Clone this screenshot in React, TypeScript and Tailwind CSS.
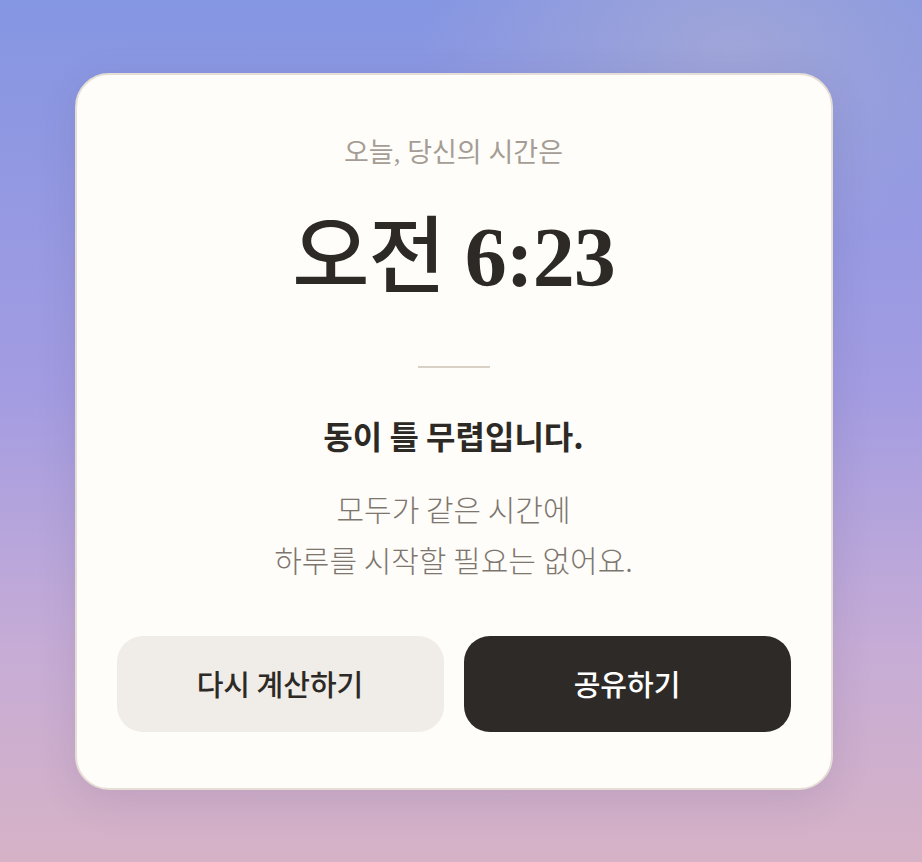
export default function App() {
  return (
    <div className="relative flex min-h-[862px] w-full items-center justify-center overflow-hidden bg-[linear-gradient(180deg,#8596e2_0%,#a39ce2_45%,#c6acd6_75%,#d6b2c6_100%)] pr-[15px]">
      {/* soft glow top right */}
      <div className="pointer-events-none absolute -right-[120px] -top-[160px] h-[420px] w-[620px] rounded-full bg-[radial-gradient(closest-side,rgba(170,172,212,0.7),rgba(170,172,212,0))]" />

      <div className="relative w-[758px] rounded-[34px] border-2 border-[#e4ded6] bg-[#fffdf9] px-10 pb-[56px] pt-[60px] text-center font-['Noto_Sans_CJK_KR','Noto_Sans',sans-serif] shadow-[0_10px_40px_rgba(60,50,90,0.12)]">
        <p className="font-['Liberation_Serif','Noto_Sans_CJK_KR',serif] text-[27px] leading-[36px] text-[#a59d95]">
          오늘, 당신의 시간은
        </p>

        <h1 className="mt-[36px] font-['Liberation_Serif','Noto_Sans_CJK_KR',serif] text-[84px] font-medium leading-[102px] tracking-[-1px] text-[#2d2a26]">
          오전 <span className="font-bold">6:23</span>
        </h1>

        <div className="mx-auto mt-[57px] h-[2px] w-[72px] bg-[#d8d1c6]" />

        <h2 className="mt-[44px] text-[32px] font-bold leading-[46px] text-[#2d2a26]">
          동이 틀 무렵입니다.
        </h2>

        <p className="mt-[25px] text-[30px] font-light leading-[51px] text-[#7d766f]">
          모두가 같은 시간에
          <br />
          하루를 시작할 필요는 없어요.
        </p>

        <div className="mt-[51px] grid grid-cols-2 gap-5">
          <button className="h-[96px] rounded-[26px] bg-[#f0ece8] text-[29px] font-medium text-[#2d2a26]">
            다시 계산하기
          </button>
          <button className="h-[96px] rounded-[26px] bg-[#2d2a27] text-[29px] font-medium text-white">
            공유하기
          </button>
        </div>
      </div>
    </div>
  );
}
